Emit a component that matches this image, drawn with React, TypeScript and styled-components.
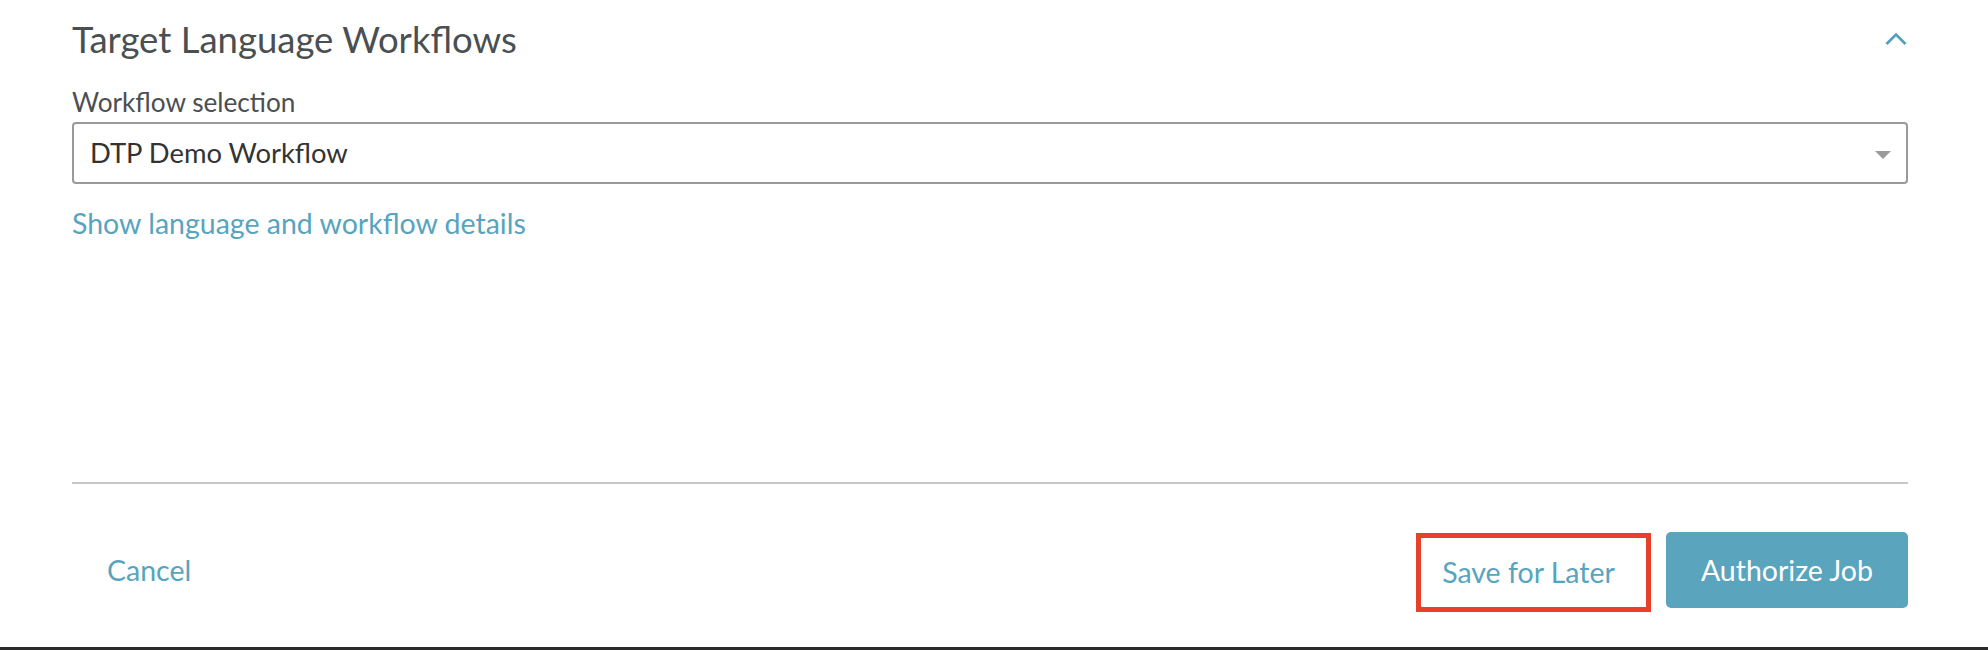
import React from "react";
import styled, { createGlobalStyle } from "styled-components";

const GlobalStyle = createGlobalStyle`
  html, body { margin: 0; padding: 0; background: #ffffff; }
  body { font-family: "Lato", "Liberation Sans", sans-serif; }
  * { box-sizing: border-box; }
`;

const Page = styled.div`
  height: 650px;
  display: grid;
  grid-template-rows: 1fr auto auto;
  background: #ffffff;
`;

const Main = styled.section`
  padding: 17px 80px 0 72px;
  display: flex;
  flex-direction: column;
`;

const HeaderRow = styled.div`
  display: flex;
  align-items: center;
  justify-content: space-between;
`;

const Title = styled.h2`
  margin: 0;
  font-size: 36.5px;
  line-height: 44px;
  font-weight: 400;
  color: #4a4f51;
`;

const CollapseButton = styled.button`
  border: 0;
  background: transparent;
  padding: 0;
  margin-right: 1px;
  display: flex;
  cursor: pointer;
`;

const FieldLabel = styled.label`
  margin-top: 25px;
  font-size: 26.2px;
  line-height: 32px;
  color: #4b4f51;
`;

const SelectBox = styled.div`
  margin-top: 4px;
  height: 62px;
  border: 2px solid #9a9a9a;
  border-radius: 4px;
  display: flex;
  align-items: center;
  justify-content: space-between;
  padding: 0 15px 0 16px;
`;

const SelectValue = styled.span`
  font-size: 27.4px;
  line-height: 58px;
  color: #333333;
`;

const Caret = styled.svg`
  margin-top: 4px;
`;

const DetailsLink = styled.a`
  margin-top: 22px;
  font-size: 28.5px;
  line-height: 34px;
  color: #57a4bf;
  text-decoration: none;
  align-self: flex-start;
  cursor: pointer;
`;

const Footer = styled.footer`
  margin: 0 80px 0 72px;
  border-top: 2px solid #c8c8c8;
  padding: 48px 0 35px;
  display: flex;
  align-items: flex-start;
  justify-content: space-between;
`;

const ButtonGroup = styled.div`
  display: flex;
  align-items: flex-start;
  gap: 15px;
`;

const Button = styled.button<{ $variant: "link" | "primary" | "highlighted" }>`
  font-family: "Lato", "Liberation Sans", sans-serif;
  font-size: 28.5px;
  font-weight: 400;
  height: ${(p) => (p.$variant === "highlighted" ? "79px" : "76px")};
  line-height: ${(p) => (p.$variant === "highlighted" ? "69px" : "76px")};
  margin-top: ${(p) => (p.$variant === "highlighted" ? "1px" : "0")};
  padding: ${(p) => (p.$variant === "highlighted" ? "0 31px 0 21px" : "0 35px")};
  border-radius: ${(p) => (p.$variant === "primary" ? "5px" : "0")};
  border: ${(p) => (p.$variant === "highlighted" ? "5px solid #e8412a" : "0")};
  background: ${(p) => (p.$variant === "primary" ? "#5aa4be" : "transparent")};
  color: ${(p) => (p.$variant === "primary" ? "#ffffff" : "#57a4bf")};
  white-space: nowrap;
  cursor: pointer;
`;

const BottomEdge = styled.div`
  height: 3px;
  background: #2b2b2b;
`;

export default function App() {
  return (
    <Page>
      <GlobalStyle />
      <Main>
        <HeaderRow>
          <Title>Target Language Workflows</Title>
          <CollapseButton aria-label="Collapse">
            <svg width="22" height="14" viewBox="0 0 22 14" fill="none">
              <path d="M1.5 12 L11 2.5 L20.5 12" stroke="#4f9fbe" strokeWidth="2.6" />
            </svg>
          </CollapseButton>
        </HeaderRow>
        <FieldLabel>Workflow selection</FieldLabel>
        <SelectBox>
          <SelectValue>DTP Demo Workflow</SelectValue>
          <Caret width="16" height="8" viewBox="0 0 16 8">
            <path d="M0 0 H16 L8 8 Z" fill="#9a9a9a" />
          </Caret>
        </SelectBox>
        <DetailsLink>Show language and workflow details</DetailsLink>
      </Main>
      <Footer>
        <Button $variant="link">Cancel</Button>
        <ButtonGroup>
          <Button $variant="highlighted">Save for Later</Button>
          <Button $variant="primary">Authorize Job</Button>
        </ButtonGroup>
      </Footer>
      <BottomEdge />
    </Page>
  );
}
